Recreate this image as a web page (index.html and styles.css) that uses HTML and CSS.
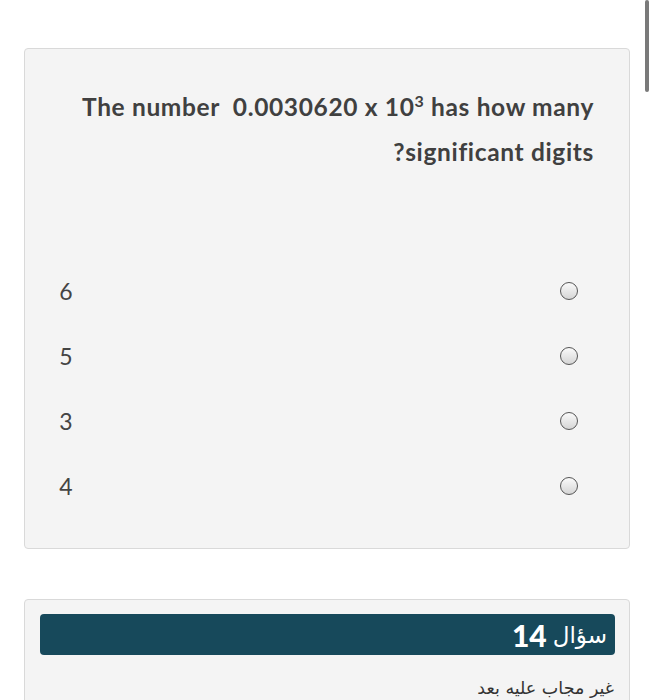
FILE: index.html
```html
<!DOCTYPE html>
<html lang="ar" dir="rtl">
<head>
<meta charset="utf-8">
<link rel="stylesheet" href="styles.css">
</head>
<body>
<div class="scrollbar"></div>
<div class="page">
  <div class="card question-card">
    <p class="qtext" dir="rtl">The number&nbsp; 0.0030620 x 10<sup>3</sup> has how many<br>significant digits?</p>
    <div class="options">
      <label class="option"><span class="radio"></span><span class="val">6</span></label>
      <label class="option"><span class="radio"></span><span class="val">5</span></label>
      <label class="option"><span class="radio"></span><span class="val">3</span></label>
      <label class="option"><span class="radio"></span><span class="val">4</span></label>
    </div>
  </div>
  <div class="card next-card">
    <div class="qhead"><span class="qword">سؤال</span> <span class="qnum">14</span></div>
    <div class="status">غير مجاب عليه بعد</div>
  </div>
</div>
</body>
</html>
```
FILE: styles.css
```css
html, body {
  margin: 0;
  padding: 0;
  background: #ffffff;
  height: 700px;
  overflow: hidden;
}
body {
  font-family: Lato, "DejaVu Sans", sans-serif;
  color: #3d3d3d;
  position: relative;
}
.scrollbar {
  position: absolute;
  top: 0;
  left: 645px;
  width: 4px;
  height: 92px;
  background: #7a7a7a;
  border-radius: 2px;
}
.page {
  padding: 48px 25px 0 24px;
  display: flex;
  flex-direction: column;
  gap: 50px;
}
.card {
  background: #f4f4f4;
  border: 1px solid #d9d9d9;
  border-radius: 4px;
}
.question-card {
  height: 499px;
  box-sizing: content-box;
}
.qtext {
  margin: 35px 35px 0 0;
  text-align: right;
  font-weight: 700;
  font-size: 24.5px;
  letter-spacing: 0.65px;
  line-height: 45px;
  color: #404040;
}
.qtext sup {
  font-size: 16px;
  line-height: 0;
  vertical-align: 9px;
}
.options {
  margin-top: 84px;
  display: flex;
  flex-direction: column;
}
.option {
  height: 65px;
  display: flex;
  align-items: center;
  justify-content: space-between;
  padding: 0 51px 0 30px;
}
.radio {
  width: 16px;
  height: 16px;
  border: 1.5px solid #555;
  border-radius: 50%;
  background: linear-gradient(#fafafa, #d5d5d5);
  box-sizing: content-box;
}
.val {
  font-size: 23px;
  font-weight: 400;
  color: #444;
  width: 16px;
  margin-left: 3px;
  text-align: center;
}
.next-card {
  height: 120px;
  padding: 14px 14px 0 15px;
}
.qhead {
  background: #17495b;
  color: #fff;
  border-radius: 4px;
  height: 41px;
  display: flex;
  align-items: center;
  gap: 6px;
  padding-right: 8px;
}
.qword {
  font-family: "DejaVu Sans", sans-serif;
  font-size: 23px;
}
.qnum {
  font-weight: 900;
  font-size: 30px;
}
.status {
  margin-top: 23px;
  padding-right: 1px;
  font-family: "DejaVu Sans", sans-serif;
  font-size: 17.5px;
  color: #333;
}
```
